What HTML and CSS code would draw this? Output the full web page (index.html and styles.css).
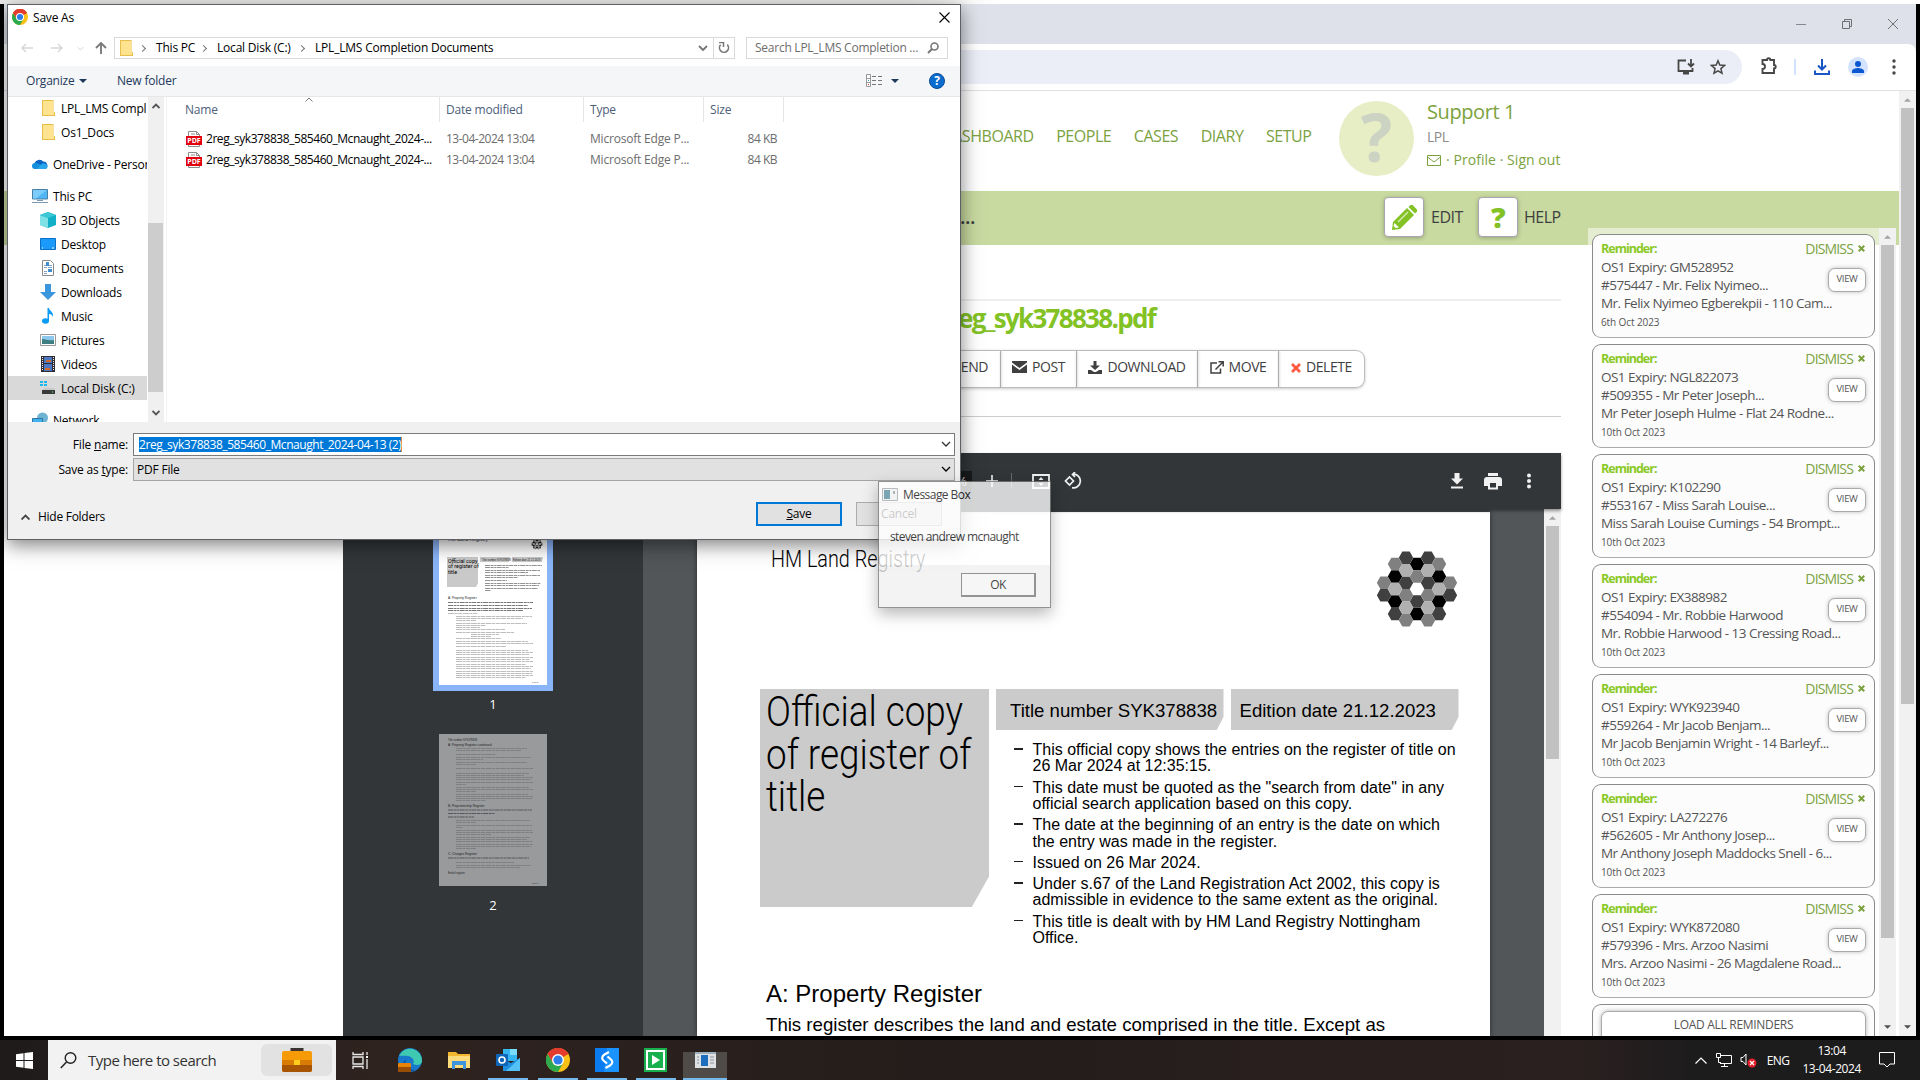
FILE: index.html
```html
<!DOCTYPE html>
<html lang="en">
<head>
<meta charset="utf-8">
<title>Save As</title>
<link rel="stylesheet" href="styles.css">
</head>
<body>
<svg class="defs" width="0" height="0">
  <defs>
    <symbol id="chrome" viewBox="0 0 24 24"><circle cx="12" cy="12" r="12" fill="#fbc116"/><path d="M12 12 1.600 6A12 12 0 0 1 22.400 6z" fill="#e33b2e"/><path d="M12 6h10.400A12 12 0 0 0 1.600 6l5.200 9z" fill="#e33b2e"/><path d="M1.600 6A12 12 0 0 0 12 24l5.200-9-5.200 3-5.200-3z" fill="#2da94f"/><circle cx="12" cy="12" r="6" fill="#fff"/><circle cx="12" cy="12" r="4.600" fill="#2f7de9"/></symbol>
    <symbol id="folder" viewBox="0 0 16 16"><path d="M2 0h11.500v12H15v4H2z" fill="#e8bf4a"/><path d="M3 1h10v11h1v3H3z" fill="#ffe391"/></symbol>
    <symbol id="pdf" viewBox="0 0 16 16"><path d="M2.500.5h8l3 3v12h-11z" fill="#fff" stroke="#8c8c8c"/><path d="M10.500.5v3h3M5 3h4" fill="none" stroke="#8c8c8c"/><path d="M0 5h16v9H0z" fill="#e2000f"/><text x="8" y="12" font-family="Open Sans, sans-serif" font-weight="700" font-size="7" text-anchor="middle" letter-spacing="0" fill="#fff">PDF</text></symbol>
    <symbol id="cross" viewBox="0 0 10 10"><path d="M2 0 5 3 8 0l2 2-3 3 3 3-2 2-3-3-3 3-2-2 3-3-3-3z" fill="currentColor"/></symbol>
    <symbol id="up" viewBox="0 0 8 4"><path d="M0 4 4 0l4 4z" fill="currentColor"/></symbol>
    <symbol id="down" viewBox="0 0 8 4"><path d="M0 0h8L4 4z" fill="currentColor"/></symbol>
    <symbol id="chev" viewBox="0 0 10 6"><path d="m1 1 4 4 4-4" fill="none" stroke="currentColor" stroke-width="1.300"/></symbol>
  </defs>
</svg>

<div class="topstrip"></div>

<div class="browser">
  <div class="tabstrip">
    <svg width="10" height="10" viewBox="0 0 10 10"><path d="M0 5.500h10" stroke="#85888c"/></svg>
    <svg width="10" height="10" viewBox="0 0 10 10"><path d="M.5 2.500h7v7h-7zM2.500 2.500v-2h7v7h-2" fill="none" stroke="#6d7075"/></svg>
    <svg width="10" height="10" viewBox="0 0 10 10"><path d="m0 0 10 10M10 0 0 10" stroke="#6d7075"/></svg>
  </div>
  <div class="toolbar">
    <div class="omnibox">
      <svg width="18" height="16" viewBox="0 0 18 16"><path d="M9 1.500H1.500v10.500h14V9M14 0v7M11 4.500l3 3 3-3" fill="none" stroke="#474747" stroke-width="1.800"/><path d="M6 12h6v3.500H6z" fill="#474747"/></svg>
      <svg width="16" height="16" viewBox="0 0 16 16"><path d="m8 1.800 1.800 4.300 4.700.4-3.600 3.100 1.100 4.600L8 11.800l-4 2.400 1.100-4.600-3.600-3.100 4.700-.4z" fill="none" stroke="#474747" stroke-width="1.500"/></svg>
    </div>
    <svg class="puzzle" width="17" height="18" viewBox="0 0 17 18"><path d="M1.500 3h4.500a1.700 1.700 0 0 1 3.400 0H13v5a1.700 1.700 0 0 1 0 3.400V16H1.500v-4a2.500 2.500 0 0 0 0-5z" fill="none" stroke="#474747" stroke-width="1.900"/></svg>
    <i class="tsep"></i>
    <svg class="dl" width="16" height="16" viewBox="0 0 16 16"><path d="M8 0v10M4 6.500l4 4 4-4M1 11.500V15h14v-3.500" fill="none" stroke="#1a57c4" stroke-width="2"/></svg>
    <svg class="avatar20" width="20" height="20" viewBox="0 0 20 20"><circle cx="10" cy="10" r="10" fill="#d3e3fd"/><circle cx="10" cy="7" r="3" fill="#0b57d0"/><path d="M4 16v-2c0-2 4-3 6-3s6 1 6 3v2z" fill="#0b57d0"/></svg>
    <svg width="4" height="16" viewBox="0 0 4 16"><g fill="#474747"><circle cx="2" cy="2" r="1.700"/><circle cx="2" cy="8" r="1.700"/><circle cx="2" cy="14" r="1.700"/></g></svg>
  </div>
  <div class="viewport">
    <main class="site">
      <header class="head">
        <nav><a>DASHBOARD</a><a>PEOPLE</a><a>CASES</a><a>DIARY</a><a>SETUP</a></nav>
        <div class="face">?</div>
        <div class="user">
          <b>Support 1</b>
          <span class="org">LPL</span>
          <span class="links"><svg width="14" height="11" viewBox="0 0 14 11"><path d="M.5.5h13v10H.5zM.5 2l6.500 5 6.500-5" fill="none" stroke="#7ba23f"/></svg> · Profile · Sign out</span>
        </div>
      </header>
      <div class="band">
        <span class="dots">Documents...</span>
        <span class="sq"><svg width="25" height="25" viewBox="0 0 25 25"><path d="m0 25 1-8L15 3l7 7L8 24z" fill="#83c225"/><path d="m16.500 2 2-2h2L25 4.500v2L23 8.500z" fill="#83c225"/><path d="m6 17 10-10" stroke="#d4eab2" stroke-width="1.500"/><path d="M2.500 18 7 22.500l-3.500.5-2-2z" fill="#fff"/></svg></span>
        <span class="bl">EDIT</span>
        <span class="sq q">?</span>
        <span class="bl help">HELP</span>
      </div>
      <section class="doc">
        <h1>2reg_syk378838.pdf</h1>
        <div class="btns">
          <span class="b-send">SEND</span>
          <span class="b-post"><svg width="15" height="12" viewBox="0 0 15 12"><path d="M0 0h15v1.500L7.500 7 0 1.500zM0 3.500 7.500 9 15 3.500V12H0z" fill="#404040"/></svg>POST</span>
          <span class="b-down"><svg width="14" height="13" viewBox="0 0 14 13"><path d="M5.500 0h3v4.500H12l-5 4.500-5-4.500h3.500zM0 9h3l3 2h2l3-2h3v4H0z" fill="#404040"/></svg>DOWNLOAD</span>
          <span class="b-move"><svg width="14" height="13" viewBox="0 0 14 13"><path d="M7 2H1v10h9.500V7.500M8.500.8h4.700v4.700M5.500 8.500 13 1" fill="none" stroke="#404040" stroke-width="1.500"/></svg>MOVE</span>
          <span class="b-del"><svg class="red" width="10" height="10"><use href="#cross"/></svg>DELETE</span>
        </div>
      </section>
      <div class="pdf">
        <div class="pbar">
          <span class="zoomv">55%</span>
          <svg class="plus" width="12" height="12" viewBox="0 0 12 12"><path d="M6 0v12M0 6h12" stroke="#f1f1f1" stroke-width="1.600"/></svg>
          <i></i>
          <svg class="fit" width="18" height="15" viewBox="0 0 18 15"><path d="M1 1h16v13H1z" fill="none" stroke="#f1f1f1" stroke-width="1.800"/><path d="m9 3 2.500 3h-5zM9 12l2.500-3h-5z" fill="#f1f1f1"/></svg>
          <svg class="rot" width="18" height="18" viewBox="0 0 18 18"><path d="m5.500 5 4 4-4 4-4-4zM9 2.200a6.800 6.800 0 1 1-1 13.400M11 0 8.500 2.500 11 5" fill="none" stroke="#f1f1f1" stroke-width="1.700"/></svg>
          <svg class="pdl" width="12" height="16" viewBox="0 0 12 16"><path d="M3.500 0h5v5.500H12l-6 6-6-6h3.500zM0 13.500h12v2H0z" fill="#f1f1f1"/></svg>
          <svg class="ppr" width="18" height="17" viewBox="0 0 18 17"><path d="M4 0h10v3H4zM0 7a3 3 0 0 1 3-3h12a3 3 0 0 1 3 3v6h-4v3.500H4V13H0z" fill="#f1f1f1"/><path d="M6 10h6v4.500H6z" fill="#323639"/></svg>
          <svg class="pdots" width="4" height="16" viewBox="0 0 4 16"><g fill="#f1f1f1"><circle cx="2" cy="2.500" r="2"/><circle cx="2" cy="8" r="2"/><circle cx="2" cy="13.500" r="2"/></g></svg>
        </div>
        <div class="pmain">
          <aside>
            <div class="thumb on">
              <svg width="108" height="152" viewBox="0 0 108 152">
                <rect width="108" height="152" fill="#fff"/>
                <text x="9" y="8" font-size="5">HM Land Registry</text>
                <use href="#biglogo" transform="translate(98 11) scale(.14)"/>
                <path d="M8 24h31v26l-2 4H8zM41 24h30l-1 5H41zM73 24h31l-1 5H73z" fill="#c9c9c9"/>
                <g class="slim"><text x="9" y="29.500">Official copy</text><text x="9" y="35.300">of register of</text><text x="9" y="41">title</text></g>
                <text x="43" y="28" font-size="2.600">Title number SYK378838</text><text x="74" y="28" font-size="2.600">Edition date 21.12.2023</text>
                <path d="M46 32.500h57M46 34.500h24M46 37.500h55M46 39.500h43M46 42.500h55M46 44.500h33M46 47.500h22M46 50.500h56M46 52.500h54M46 55.500h53M46 57.500h6" stroke="#777" stroke-dasharray="5 .6 3 .6 2 .5" stroke-width=".8"/>
                <text x="9" y="66" font-size="3.200">A: Property Register</text>
                <path d="M9 69.500h85M9 72.500h80M9 75.500h84M9 77.500h75" stroke="#777" stroke-dasharray="5 .6 3 .6 2 .5"/>
                <path d="M9 80.500h30M17 83.500h76M17 85.500h67M17 87.500h20M17 90.500h71M17 92.500h30M17 94.500h24M17 96.500h49M17 99.500h58M32 101.500h28M32 103.500h20M17 105.500h45M17 108.500h72M17 110.500h77M17 113.500h50M17 117.500h72M17 119.500h77M17 121.500h73M17 124.500h77M17 126.500h74M17 128.500h77M17 131.500h70M17 133.500h77M17 135.500h75M17 138.500h77M17 140.500h76M17 142.500h77M17 144.500h70" stroke="#b5b5b5" stroke-dasharray="6 .6 3 .6 4 .6" stroke-width=".9"/>
                <text x="93" y="149.500" font-size="2.500">1 of 3</text>
              </svg>
            </div>
            <p>1</p>
            <div class="thumb">
              <svg width="108" height="152" viewBox="0 0 108 152">
                <rect width="108" height="152" fill="#989a9c"/>
                <text x="9" y="7" font-size="2.600">Title number SYK378838</text>
                <text x="9" y="12" font-size="3.200">A: Property Register continued</text>
                <path d="M17 14.500h71M17 16.500h65M17 20.500h40M17 23.500h75M17 25.500h27M17 28.500h71M17 30.500h20M17 34.500h77M17 39.500h73M17 41.500h68M17 43.500h77M17 45.500h75M17 48.500h77M17 50.500h10M17 53.500h73M17 55.500h77M17 57.500h20M17 60.500h72M17 62.500h77M17 64.500h76M17 66.500h30M17 86.500h74M17 88.500h20M17 91.500h76M17 93.500h7M17 96.500h76M17 98.500h77M17 100.500h35M17 103.500h74M17 105.500h71M17 107.500h76M17 110.500h77M17 112.500h75M17 114.500h20M17 128.500h58M17 131.500h75M17 133.500h64" stroke="#7b7c7e" stroke-dasharray="6 .6 3 .6 4 .6" stroke-width=".9"/>
                <text x="9" y="73" font-size="3.200">B: Proprietorship Register</text>
                <path d="M9 76h84M9 79.500h47M9 83h26M9 124h81" stroke="#55575a" stroke-dasharray="5 .6 3 .6 2 .5"/>
                <text x="9" y="121" font-size="3.200">C: Charges Register</text><text x="9" y="140" font-size="2.600">End of register</text>
                <text x="93" y="149.500" font-size="2.500">2 of 3</text>
              </svg>
            </div>
            <p>2</p>
          </aside>
          <div class="pview">
            <article>
              <div class="lr">
                <span class="slim">HM Land Registry</span>
                <svg width="80" height="76" viewBox="-40 -38 80 76">
                  <g id="biglogo">
                    <g fill="#000"><path id="hx" d="M-7.200 0-3.700-6.300h7.400L7.200 0 3.700 6.300h-7.400z" transform="translate(0 -25)"/></g>
                    <use href="#hx" y="50"/><use href="#hx" x="-22" y="12.500"/><use href="#hx" x="22" y="12.500"/><use href="#hx" x="-22" y="37.500"/><use href="#hx" x="22" y="37.500"/>
                    <g fill="#404040"><path d="M-18.200-31.250l3.500-6.250h7.400l3.500 6.250-3.500 6.250h-7.400zM3.800-31.250l3.500-6.250h7.400l3.500 6.250-3.500 6.250H7.300zM-18.200-6.250l3.500-6.250h7.400l3.500 6.250L-7.300 0h-7.400zM3.800-6.250l3.500-6.250h7.400l3.500 6.250L14.700 0H7.300zM-7.200 12.500l3.500-6.250h7.400l3.500 6.250-3.500 6.250h-7.400zM-29.200 25l3.500-6.250h7.400l3.500 6.250-3.500 6.250h-7.400zM14.800 25l3.500-6.250h7.400l3.500 6.250-3.500 6.250h-7.400zM-40.200 6.250l3.500-6.250h7.400l3.500 6.250-3.500 6.250h-7.400zM25.800 6.250l3.500-6.250h7.400l3.500 6.250-3.500 6.250h-7.400z"/></g>
                    <g fill="#808080"><path d="M-7.200-12.500l3.500-6.250h7.400l3.500 6.250-3.500 6.250h-7.400zM-29.200-25l3.500-6.250h7.400l3.500 6.250-3.500 6.250h-7.400zM14.800-25l3.500-6.250h7.400l3.500 6.250-3.500 6.250h-7.400zM-40.200-6.250l3.500-6.250h7.400l3.500 6.250L-29.300 0h-7.400zM25.800-6.250l3.500-6.250h7.400l3.500 6.250L36.700 0h-7.400zM-18.200 6.250l3.500-6.250h7.400l3.500 6.250-3.500 6.250h-7.400zM3.800 6.250l3.500-6.250h7.400l3.500 6.250-3.500 6.250H7.300zM-18.200 31.250l3.500-6.250h7.400l3.500 6.250-3.500 6.250h-7.400zM3.800 31.250l3.500-6.250h7.400l3.500 6.250-3.500 6.250H7.300z"/></g>
                    <g fill="#b0b0b0"><path d="M-18.200-18.750l3.500-6.250h7.400l3.500 6.250-3.500 6.250h-7.400zM3.800-18.750l3.500-6.250h7.400l3.500 6.250-3.500 6.250H7.300zM-29.200 0l3.500-6.250h7.400l3.500 6.250-3.500 6.250h-7.400zM14.800 0l3.500-6.250h7.400l3.500 6.250-3.500 6.250h-7.400zM-18.200 18.750l3.500-6.250h7.400l3.500 6.250-3.500 6.250h-7.400zM3.800 18.750l3.500-6.250h7.400l3.500 6.250-3.500 6.250H7.300z"/></g>
                  </g>
                </svg>
              </div>
              <div class="title">
                <div class="official"><span class="slim">Official copy<br>of register of<br>title</span></div>
                <div class="facts">
                  <div class="tags"><span>Title number SYK378838</span><span>Edition date 21.12.2023</span></div>
                  <ul>
                    <li>This official copy shows the entries on the register of title on<br>26 Mar 2024 at 12:35:15.</li>
                    <li>This date must be quoted as the "search from date" in any<br>official search application based on this copy.</li>
                    <li>The date at the beginning of an entry is the date on which<br>the entry was made in the register.</li>
                    <li>Issued on 26 Mar 2024.</li>
                    <li>Under s.67 of the Land Registration Act 2002, this copy is<br>admissible in evidence to the same extent as the original.</li>
                    <li>This title is dealt with by HM Land Registry Nottingham<br>Office.</li>
                  </ul>
                </div>
              </div>
              <h2>A: Property Register</h2>
              <p>This register describes the land and estate comprised in the title. Except as<br>mentioned below, the title includes any legal easements granted by the</p>
            </article>
            <div class="sb psb"><svg width="7" height="4"><use href="#up"/></svg><b></b></div>
          </div>
        </div>
      </div>
    </main>
    <div class="sb msb"><svg width="7" height="4"><use href="#up"/></svg><b></b><svg class="dn" width="7" height="4"><use href="#down"/></svg></div>

    <div class="reminders">
      <div class="cards">
        <div class="card"><div class="r1"><b>Reminder:</b><span>DISMISS <svg width="7" height="7"><use href="#cross"/></svg></span></div><div class="view">VIEW</div><p>OS1 Expiry: GM528952</p><p>#575447 - Mr. Felix Nyimeo...</p><p>Mr. Felix Nyimeo Egberekpii - 110 Cam...</p><small>6th Oct 2023</small></div>
        <div class="card"><div class="r1"><b>Reminder:</b><span>DISMISS <svg width="7" height="7"><use href="#cross"/></svg></span></div><div class="view">VIEW</div><p>OS1 Expiry: NGL822073</p><p>#509355 - Mr Peter Joseph...</p><p>Mr Peter Joseph Hulme - Flat 24 Rodne...</p><small>10th Oct 2023</small></div>
        <div class="card"><div class="r1"><b>Reminder:</b><span>DISMISS <svg width="7" height="7"><use href="#cross"/></svg></span></div><div class="view">VIEW</div><p>OS1 Expiry: K102290</p><p>#553167 - Miss Sarah Louise...</p><p>Miss Sarah Louise Cumings - 54 Brompt...</p><small>10th Oct 2023</small></div>
        <div class="card"><div class="r1"><b>Reminder:</b><span>DISMISS <svg width="7" height="7"><use href="#cross"/></svg></span></div><div class="view">VIEW</div><p>OS1 Expiry: EX388982</p><p>#554094 - Mr. Robbie Harwood</p><p>Mr. Robbie Harwood - 13 Cressing Road...</p><small>10th Oct 2023</small></div>
        <div class="card"><div class="r1"><b>Reminder:</b><span>DISMISS <svg width="7" height="7"><use href="#cross"/></svg></span></div><div class="view">VIEW</div><p>OS1 Expiry: WYK923940</p><p>#559264 - Mr Jacob Benjam...</p><p>Mr Jacob Benjamin Wright - 14 Barleyf...</p><small>10th Oct 2023</small></div>
        <div class="card"><div class="r1"><b>Reminder:</b><span>DISMISS <svg width="7" height="7"><use href="#cross"/></svg></span></div><div class="view">VIEW</div><p>OS1 Expiry: LA272276</p><p>#562605 - Mr Anthony Josep...</p><p>Mr Anthony Joseph Maddocks Snell - 6...</p><small>10th Oct 2023</small></div>
        <div class="card"><div class="r1"><b>Reminder:</b><span>DISMISS <svg width="7" height="7"><use href="#cross"/></svg></span></div><div class="view">VIEW</div><p>OS1 Expiry: WYK872080</p><p>#579396 - Mrs. Arzoo Nasimi</p><p>Mrs. Arzoo Nasimi - 26 Magdalene Road...</p><small>10th Oct 2023</small></div>
        <div class="card last"><div class="load">LOAD ALL REMINDERS</div></div>
      </div>
      <div class="sb rsb"><svg width="7" height="4"><use href="#up"/></svg><b></b><svg class="dn" width="7" height="4"><use href="#down"/></svg></div>
    </div>
  </div>
</div>

<div class="dialog">
  <div class="dtitle"><svg width="16" height="16"><use href="#chrome"/></svg><span>Save As</span><svg class="x" width="11" height="11" viewBox="0 0 11 11"><path d="m.5.5 10 10M10.500.5l-10 10" stroke="#000" stroke-width="1.100"/></svg></div>
  <div class="daddr">
    <svg class="a1" width="12" height="10" viewBox="0 0 12 10"><path d="M12 5H1M5 1 1 5l4 4" fill="none" stroke="#d6d6d6" stroke-width="1.400"/></svg>
    <svg class="a2" width="12" height="10" viewBox="0 0 12 10"><path d="M0 5h11M7 1l4 4-4 4" fill="none" stroke="#d6d6d6" stroke-width="1.400"/></svg>
    <svg class="a3 lite" width="7" height="5"><use href="#chev"/></svg>
    <svg class="a4" width="12" height="12" viewBox="0 0 12 12"><path d="M6 12V1.500M1 6l5-5 5 5" fill="none" stroke="#7b7b7b" stroke-width="1.900"/></svg>
    <div class="path"><svg width="16" height="16"><use href="#folder"/></svg><em></em><span class="c1">This PC</span><em></em><span class="c2">Local Disk (C:)</span><em></em><span class="c3">LPL_LMS Completion Documents</span><svg class="pc" width="10" height="6" viewBox="0 0 10 6"><path d="m1 1 4 4 4-4" fill="none" stroke="#777" stroke-width="1.900"/></svg></div>
    <div class="refresh"><svg width="12" height="12" viewBox="0 0 12 12"><path d="M2.600 2.800a4.500 4.500 0 1 0 6.600-.2" fill="none" stroke="#777" stroke-width="1.600"/><path d="M1 .5h4.500V5" fill="none" stroke="#777" stroke-width="1.500"/></svg></div>
    <div class="search"><span>Search LPL_LMS Completion ...</span><svg width="12" height="12" viewBox="0 0 12 12"><circle cx="7.500" cy="4.500" r="3.500" fill="none" stroke="#777" stroke-width="1.600"/><path d="M5 7 1 11" stroke="#777" stroke-width="1.900"/></svg></div>
  </div>
  <div class="dcmd"><span class="org2">Organize</span><svg width="8" height="4"><use href="#down"/></svg><span class="nf">New folder</span>
    <svg class="vw" width="16" height="13" viewBox="0 0 16 13"><path d="M.5.5h4v12h-4zM.5 4.500h4M.5 8.500h4" fill="#fff" stroke="#999"/><path d="M6 2.500h4m2 0h4M6 6.500h4m2 0h4M6 10.500h4m2 0h4" stroke="#777"/><path d="M2 6h1v1H2z" fill="#3a9be8"/><path d="M2 10h1v1H2z" fill="#d33"/></svg>
    <svg width="8" height="4"><use href="#down"/></svg><i class="hlp">?</i></div>
  <div class="dmain">
    <div class="tree">
      <div><svg width="16" height="16"><use href="#folder"/></svg>LPL_LMS Compl</div>
      <div><svg width="16" height="16"><use href="#folder"/></svg>Os1_Docs</div>
      <div class="top od"><svg width="16" height="16" viewBox="0 0 16 16"><path d="M3 12.500A3 3 0 0 1 2.600 7 5 5 0 0 1 11 5.500a4 4 0 0 1 3 7z" fill="#0a64c4"/><path d="M3 13a3 3 0 0 1 0-6c2-.4 4 .6 6 2l5 3.500c-.3.400-1 .5-1.500.5z" fill="#1490df"/><path d="M9 8.500a4 4 0 0 1 6 .5 2.600 2.600 0 0 1-1 4H5z" fill="#28a8ea"/></svg>OneDrive - Person</div>
      <div class="top pc2"><svg width="16" height="16" viewBox="0 0 16 16"><path d="M.5 1.500h15v9.500H.5z" fill="#4fb5f5" stroke="#4a7fa5"/><path d="M1 2h14L4 10.500H1z" fill="#7cccfb"/><path d="M5 12.500h6M0 14.500h16" stroke="#7e98ab"/></svg>This PC</div>
      <div class="sub"><svg width="16" height="16" viewBox="0 0 16 16"><path d="m8 0 8 3v10l-8 3-8-3V3z" fill="#12b0c6"/><path d="m0 3 8 3v10l-8-3z" fill="#7fe0e6"/><path d="m8 0 8 3-8 3-8-3z" fill="#3cc7d6"/></svg>3D Objects</div>
      <div><svg width="16" height="16" viewBox="0 0 16 16"><path d="M.5 2.500h15v11H.5z" fill="#1a9bfc" stroke="#0b6fc4"/><path d="M2 12h1M12 12h2" stroke="#fff"/></svg>Desktop</div>
      <div><svg width="16" height="16" viewBox="0 0 16 16"><path d="M2.500.5h8l3 3v12h-11z" fill="#fff" stroke="#8a8a8a"/><path d="M4 5.500h3m1 0h4M4 7.500h3m1 0h4M4 11.500h3M4 13.500h3" stroke="#7fa6c9"/><path d="M6 2h3v4H6zM8 9h4v3H8z" fill="#3f8fd0"/></svg>Documents</div>
      <div><svg width="16" height="16" viewBox="0 0 16 16"><path d="M5 0h6v8h5l-8 8-8-8h5z" fill="#3a96dd"/></svg>Downloads</div>
      <div><svg width="16" height="16" viewBox="0 0 16 16"><ellipse cx="5.500" cy="13" rx="3.500" ry="2.800" fill="#0a9bf5"/><path d="M7.500 0H9c.5 3 5 4 4 9-.5-2-2-3-4-3v7H7.500z" fill="#0a9bf5"/></svg>Music</div>
      <div><svg width="16" height="16" viewBox="0 0 16 16"><path d="M.5 2.500h15v11H.5z" fill="#fff" stroke="#999"/><path d="M2 4h12v8H2z" fill="#8cc8ee"/><path d="M2 7c4 0 6 2 12 1v4H2z" fill="#3d7f80"/></svg>Pictures</div>
      <div><svg width="16" height="16" viewBox="0 0 16 16"><path d="M1 0h14v16H1z" fill="#2d2d35"/><path d="M4 1h8v6H4zM4 8h8v7H4z" fill="#4d78c4"/><path d="M2.500 1v14M13.500 1v14" stroke="#eee" stroke-dasharray="1 1"/><path d="M6 4h5v2H6zM5 12h5v2H5z" fill="#d5692d"/></svg>Videos</div>
      <div class="sel"><svg width="16" height="16" viewBox="0 0 16 16"><path d="M0 1h3v2H0zM4 1h3v2H4zM0 4h3v2H0zM4 4h3v2H4z" fill="#1cb8ea"/><path d="m3 9 1-1h10l1 3H3z" fill="#c9c9c9"/><path d="M2 10h13v4H2z" fill="#3a3a3a"/><path d="M12 12h1" stroke="#6f6"/></svg>Local Disk (C:)</div>
      <div class="top net"><svg width="16" height="16" viewBox="0 0 16 16"><circle cx="10.500" cy="6" r="5.500" fill="#6fb3d4"/><path d="M.5 6.500h10v7H.5z" fill="#3fb2f0" stroke="#33749f"/></svg>Network</div>
    </div>
    <div class="tsb"><svg width="8" height="6" viewBox="0 0 8 6"><path d="m.5 5 3.500-3.500L7.500 5" fill="none" stroke="#555" stroke-width="1.900"/></svg><b></b><svg class="dn" width="8" height="6" viewBox="0 0 8 6"><path d="m.5 1 3.500 3.500L7.500 1" fill="none" stroke="#555" stroke-width="1.900"/></svg></div>
    <div class="list">
      <div class="row hd"><span class="n">Name</span><span class="d">Date modified</span><span class="t">Type</span><span class="s">Size</span></div>
      <svg class="sort" width="8" height="5" viewBox="0 0 8 5"><path d="m.5 4.500 3.500-3.500 3.500 3.500" fill="none" stroke="#777"/></svg>
      <div class="row"><span class="n"><svg width="16" height="16"><use href="#pdf"/></svg>2reg_syk378838_585460_Mcnaught_2024-...</span><span class="d">13-04-2024 13:04</span><span class="t">Microsoft Edge P...</span><span class="s">84 KB</span></div>
      <div class="row"><span class="n"><svg width="16" height="16"><use href="#pdf"/></svg>2reg_syk378838_585460_Mcnaught_2024-...</span><span class="d">13-04-2024 13:04</span><span class="t">Microsoft Edge P...</span><span class="s">84 KB</span></div>
    </div>
  </div>
  <div class="dfoot">
    <div class="f"><label>File <u>n</u>ame:</label><div class="inp"><mark>2reg_syk378838_585460_Mcnaught_2024-04-13 (2)</mark><svg width="10" height="6"><use href="#chev"/></svg></div></div>
    <div class="f f2"><label>Save as <u>t</u>ype:</label><div class="inp g"><span>PDF File</span><svg width="10" height="6"><use href="#chev"/></svg></div></div>
    <div class="acts"><div class="hide"><svg width="9" height="6" viewBox="0 0 9 6"><path d="m.5 5.500 4-4 4 4" fill="none" stroke="#444" stroke-width="1.800"/></svg>Hide Folders</div><div class="btn save"><u>S</u>ave</div><div class="btn">Cancel</div></div>
  </div>
</div>

<div class="msg">
  <div class="mt"><svg width="16" height="13" viewBox="0 0 16 13"><path d="M.5.5h15v12H.5z" fill="#f4f4f4" stroke="#a9aeb2"/><path d="M2 2h6v9H2z" fill="#5b93a3"/><path d="M11 3h2v3h-2z" fill="#9aa"/></svg>Message Box</div>
  <div class="mb">steven andrew mcnaught</div>
  <div class="mf"><span>OK</span></div>
</div>

<div class="taskbar">
  <div class="start"><svg width="17" height="17" viewBox="0 0 17 17"><path d="M0 2.300 7.500 1.200V8H0zM8.500 1 17 0v8H8.500zM0 9h7.500v6.800L0 14.700zM8.500 9H17v8l-8.500-1.100z" fill="#fff"/></svg></div>
  <div class="tsearch"><svg width="17" height="17" viewBox="0 0 17 17"><circle cx="10.500" cy="6" r="5.300" fill="none" stroke="#222" stroke-width="1.400"/><path d="M6.500 10 .8 16" stroke="#222" stroke-width="1.500"/></svg><span>Type here to search</span>
    <div class="pill"><svg width="30" height="26" viewBox="0 0 30 26"><path d="M10 5V2.500h10V5" fill="none" stroke="#3a3330" stroke-width="3"/><rect y="4" width="30" height="21" rx="2" fill="#f79a08"/><path d="M0 15h30v8a2 2 0 0 1-2 2H2a2 2 0 0 1-2-2z" fill="#a85405"/><path d="M0 13h30v5H0z" fill="#d97c05"/><path d="M12 13h6v5h-6z" fill="#ffcd1c"/></svg></div></div>
  <div class="ic i1"><svg width="17" height="17" viewBox="0 0 17 17"><path d="M1 0v2.500h10V0M1 17v-2.500h10V17M1 5h10v7H1zM15 0v3M15 7v10" fill="none" stroke="#e8e8e8" stroke-width="1.300"/><path d="M14 4h2v2h-2z" fill="#fff"/></svg></div>
  <div class="ic"><svg width="24" height="24" viewBox="0 0 24 24"><circle cx="12" cy="12" r="12" fill="#1878cc"/><path d="M1 8A12 12 0 0 1 24 13c0 4-5 5-9 3 2-3 0-7-5-8-4-.5-7 0-9 0z" fill="#3fc9b0"/><path d="M8 12c-2 5 2 10 9 10a12 12 0 0 1-8 1.500C5 22 3 14 8 12z" fill="#0c4f9e"/><rect y="15" width="13" height="9" rx="1" fill="#e8830a"/><path d="M0 19h13v5H0z" fill="#9a4d06"/></svg></div>
  <div class="ic"><svg width="22" height="19" viewBox="0 0 22 19"><path d="M0 1h8l2 2h12v14H0z" fill="#f3b72f"/><path d="M0 5h22v12H0z" fill="#ffdc7b"/><path d="M4 10h14v8h-3v-4H7v4H4z" fill="#3f95dd"/></svg></div>
  <div class="ic run"><svg width="24" height="22" viewBox="0 0 24 22"><path d="M7 0h14v12H7z" fill="#35b6f0"/><path d="M14 0h7v6h-7z" fill="#7adcfb"/><path d="M7 10l8 4 9-5v13H7z" fill="#1f8fe0"/><path d="m24 9-14 13h14z" fill="#55c2f5"/><rect y="5" width="12" height="12" rx="1" fill="#0f66b8"/><circle cx="6" cy="11" r="3" fill="none" stroke="#fff" stroke-width="1.600"/></svg></div>
  <div class="ic run cr"><svg width="24" height="24"><use href="#chrome"/></svg></div>
  <div class="ic run"><svg width="24" height="24" viewBox="0 0 24 24"><path d="M0 0h24v24H0z" fill="#0a7cf0"/><path d="M12 0h12v24H9z" fill="#1a93ff"/><path d="M14 4 9.500 6.500c-3 2-3 4.500-.5 6.500l3 2.500M10.500 20l4.500-2.500c3-2 3-4.500.5-6.500l-3-2.500" fill="none" stroke="#fff" stroke-width="2.200"/></svg></div>
  <div class="ic run"><svg width="23" height="24" viewBox="0 0 23 24"><path d="M0 0h23v24H0z" fill="#17b04c"/><path d="M3 3h17v18H3z" fill="none" stroke="#fff" stroke-width="2"/><path d="m8 7 8 5-8 5z" fill="#fff"/></svg></div>
  <div class="ic run act"><svg width="21" height="16" viewBox="0 0 21 16"><path d="M0 0h21v16H0z" fill="#dfe2e4"/><path d="M0 0h21v2H0z" fill="#9fb0bd"/><path d="M6 3h7v11H6z" fill="#1d6fbd"/><path d="M2 5h2M2 8h2M2 11h2M15 5h4M15 8h4M15 11h4" stroke="#8a949c"/></svg></div>
  <div class="tray">
    <svg width="12" height="7" viewBox="0 0 12 7"><path d="m.5 6.500 5.500-5.500 5.500 5.500" fill="none" stroke="#fff" stroke-width="1.200"/></svg>
    <svg class="y1" width="16" height="14" viewBox="0 0 16 14"><path d="M4 2.500h11.500v8H4M5 13.500h7M8.500 10.500v3M.5.500h4v4h-4zM2.500 4.500v5H5" fill="none" stroke="#fff"/></svg>
    <svg class="y2" width="17" height="15" viewBox="0 0 17 15"><path d="M1 4.500h2l3-3.500v11l-3-3.500H1z" fill="none" stroke="#fff"/><circle cx="12" cy="10" r="4.500" fill="#e0202a"/><path d="m10 8 4 4M14 8l-4 4" stroke="#fff" stroke-width="1.200"/></svg>
    <span class="eng">ENG</span>
    <span class="clock">13:04<br>13-04-2024</span>
    <svg class="y3" width="16" height="16" viewBox="0 0 16 16"><path d="M.5.5h15v11.500h-4.500L8 15l-3-3H.5z" fill="none" stroke="#fff"/></svg>
  </div>
</div>
</body>
</html>
```
FILE: styles.css
```css
* { box-sizing: border-box; }
body { margin: 0; width: 1920px; height: 1080px; overflow: hidden; background: #000; font-family: "Open Sans", "Noto Sans", sans-serif; position: relative; }
p, h1, h2, ul { margin: 0; padding: 0; font-weight: 400; }
svg { display: block; flex: none; }
.thumb text { font-family: "Liberation Sans", sans-serif; fill: #222; }
.defs { position: absolute; }
.topstrip { height: 4px; background: linear-gradient(90deg, #ececea 900px, #fff 1000px); }

/* browser window */
.browser { position: absolute; left: 4px; top: 4px; width: 1912px; height: 1032px; background: #fff; display: flex; flex-direction: column; overflow: hidden; }
.tabstrip { height: 40px; background: #dee1e9; display: flex; justify-content: flex-end; align-items: center; gap: 36px; padding-right: 18px; flex: none; }
.toolbar { height: 47px; border-bottom: 1px solid #dfe0e3; background: #fff; display: flex; align-items: center; justify-content: flex-end; padding-right: 20px; flex: none; border-radius: 0 8px 0 0; box-shadow: 8px -8px 0 #dee1e9; }
.omnibox { width: 1500px; height: 34px; border-radius: 17px; background: #ebeef7; display: flex; align-items: center; justify-content: flex-end; gap: 15px; padding-right: 16px; }
.puzzle { margin-left: 19px; margin-top: -2px; }
.tsep { width: 2px; height: 16px; background: #d3e3fd; margin: 0 18px 0 16px; }
.avatar20 { margin: 0 24px 0 18px; }
.viewport { flex: 1; display: flex; position: relative; min-height: 0; }
.site { flex: 1; min-width: 0; display: flex; flex-direction: column; overflow: hidden; }
.sb { background: #f1f1f1; width: 17px; display: flex; flex-direction: column; align-items: center; color: #a3a3a3; padding-top: 7px; flex: none; }
.sb b { width: 13px; background: #c1c1c1; margin-top: 6px; }
.sb .dn { color: #505050; margin-top: auto; margin-bottom: 7px; }
.msb b { height: 596px; }

.head { height: 100px; flex: none; width: 1557px; display: flex; justify-content: flex-end; }
.head nav { display: flex; gap: 22.500px; align-items: center; margin-right: 27.500px; height: 90px; font-size: 16px; letter-spacing: -.45px; color: #7ba23f; }
.face { width: 75px; height: 75px; border-radius: 50%; background: #e7edc5; color: #cdd3c3; font: 700 66px/70px "Open Sans", sans-serif; text-align: center; margin: 10px 13px 0 0; }
.user { width: 134px; display: flex; flex-direction: column; color: #7ba23f; padding-top: 7px; white-space: nowrap; }
.user b { font-weight: 400; font-size: 20px; line-height: 28px; letter-spacing: -.4px; }
.user .org { color: #8b8b8b; font-size: 14px; line-height: 22px; letter-spacing: -.5px; }
.links { display: flex; align-items: center; gap: 5px; font-size: 14px; line-height: 24px; letter-spacing: .05px; }
.band { height: 54px; background: #c8daa0; display: flex; align-items: center; flex: none; padding-left: 850px; color: #3f4040; font-size: 16px; letter-spacing: -.5px; }
.dots { font-size: 20px; width: 530px; font-weight: 600; padding-bottom: 4px; }
.sq { width: 40px; height: 40px; border: 1px solid #aaa3b0; border-radius: 4px; background: #fff; box-shadow: 0 1px 4px rgba(0,0,0,.25); display: flex; align-items: center; justify-content: center; margin-top: -2px; }
.q { color: #83c225; font: 800 29px/36px "Open Sans", sans-serif; margin-left: 14px; }
.bl { width: 33px; margin-left: 7px; padding-bottom: 2px; }
.help { margin-left: 6px; }
.doc { width: 1218px; margin: 54px 0 0 339px; height: 118px; border-top: 2px solid #eee; border-bottom: 1px solid #ccc; flex: none; }
.doc h1 { width: 812px; text-align: right; color: #83c225; font: 700 26px/34px "Open Sans", sans-serif; letter-spacing: -1.700px; height: 50px; }
.btns { width: 1022px; height: 38px; display: flex; justify-content: flex-end; font-size: 14px; line-height: 32px; letter-spacing: -.45px; color: #404040; margin-top: -1px; }
.btns span { border: 1px solid #bbb; border-left: 0; box-shadow: 0 1px 3px rgba(0,0,0,.22); display: flex; align-items: flex-start; justify-content: center; gap: 5px; }
.btns svg { margin-top: 10px; }
.b-send { width: 100px; justify-content: flex-end !important; padding-right: 12px; }
.b-post { width: 76px; } .b-down { width: 121px; } .b-move { width: 81px; } .b-del { width: 86px; border-radius: 0 9px 9px 0; }
.red { color: #ff5a44; margin-top: 12px !important; }

/* pdf viewer */
.pdf { width: 1218px; margin: 36px 0 0 339px; display: flex; flex-direction: column; flex: 1; min-height: 0; }
.pbar { height: 56px; background: #323639; display: flex; align-items: center; flex: none; padding-left: 590px; position: relative; box-shadow: 0 2px 3px rgba(0,0,0,.4); }
.pbar i { width: 1px; height: 16px; background: #666a6d; margin: 0 20px 0 13px; }
.zoomv { background: #191b1c; color: #f1f1f1; font-size: 13px; line-height: 20px; width: 39px; text-align: right; padding-right: 5px; margin-right: 14px; }
.rot { margin-left: 14px; }
.pdl { margin-left: 369px; } .ppr { margin-left: 21px; } .pdots { margin-left: 25px; }
.pmain { flex: 1; display: flex; min-height: 0; }
.pmain aside { width: 300px; background: #323639; display: flex; flex-direction: column; align-items: center; color: #fff; font-size: 13px; line-height: 16px; }
.thumb.on { border: 6px solid #8ab4f8; margin-top: 18px; margin-bottom: 5px; }
.thumb + p { margin-bottom: 22px; }
.pmain aside p + .thumb { margin-bottom: 11px; }
.pview { flex: 1; background: #525659; display: flex; justify-content: space-between; padding-left: 54px; }
article { width: 793px; margin-top: 3px; background: #fff; color: #000; font-family: "Liberation Sans", Arial, sans-serif; padding: 40px 32px 0 63px; box-shadow: 0 0 5px rgba(0,0,0,.5); overflow: hidden; }
.psb b { height: 233px; }
.slim { font-family: Roboto, "Open Sans", sans-serif; font-weight: 300; white-space: nowrap; display: inline-block; transform-origin: 0 0; }
.thumb .slim text { font-family: Roboto, sans-serif; font-weight: 400; fill: #000; font-size: 5.400px; }
.lr { display: flex; justify-content: space-between; padding-left: 11px; height: 137px; }
.lr .slim { font-size: 23px; line-height: 28px; margin-top: -6px; transform: scaleX(.86); }
.lr svg { margin: -1px 1px 0 0; }
.title { display: flex; gap: 7px; }
.official { width: 229px; height: 218px; background: #cbcbcb; clip-path: polygon(0 0, 100% 0, 100% 86%, 92.500% 100%, 0 100%); padding: 2px 0 0 6px; }
.official .slim { font-size: 42px; line-height: 42.500px; transform: scaleX(.877); }
.facts { width: 463px; }
.tags { display: flex; gap: 7.500px; }
.tags span { width: 227.500px; height: 41px; background: #cbcbcb; clip-path: polygon(0 0, 100% 0, 100% 68%, 97% 100%, 0 100%); font-size: 18.600px; line-height: 43px; padding-left: 14px; white-space: nowrap; }
.tags span + span { padding-left: 8.500px; }
.facts ul { list-style: none; font-size: 16px; line-height: 16.400px; margin-top: 12px; padding-left: 36.500px; white-space: nowrap; }
.facts li { margin-bottom: 4.800px; position: relative; }
.facts li::before { content: ""; position: absolute; left: -19px; top: 6px; width: 9px; height: 1.500px; background: #222; }
article h2 { font-size: 24px; line-height: 28px; margin: 28.500px 0 0 6px; }
article > p { font-size: 18.640px; line-height: 18.700px; margin: 8px 0 0 6px; white-space: nowrap; }

/* reminders */
.reminders { position: absolute; left: 1584px; top: 137px; width: 308px; height: 808px; display: flex; background: rgba(255,255,255,.5); overflow: hidden; }
.cards { flex: 1; padding: 6px 4px 0; }
.card { height: 104px; margin-bottom: 6px; border: 1px solid #8a8a8a; border-bottom-color: #aaa; border-radius: 9px; background: #fcfcfc; padding: 5px 8px; color: #555; font-size: 13.500px; line-height: 18px; letter-spacing: -.52px; white-space: nowrap; }
.r1 { display: flex; justify-content: space-between; letter-spacing: -.85px; color: #7ba23f; height: 17.500px; line-height: 18px; font-size: 14px; }
.r1 b { color: #8ac926; font-size: 12.500px; letter-spacing: -1px; }
.r1 span { display: flex; align-items: center; gap: 5px; margin-right: 1px; }
.view { float: right; width: 38px; height: 24px; margin-top: 10px; border: 1px solid #aaa; border-radius: 7px; background: #fff; box-shadow: 0 0 4px rgba(0,0,0,.25); text-align: center; font-size: 9.500px; line-height: 19px; letter-spacing: -.35px; }
.card small { font-size: 10px; line-height: 20px; letter-spacing: -.1px; display: block; }
.last { padding: 6px 8px; }
.load { height: 40px; border: 1px solid #aaa; border-radius: 7px; background: #fff; box-shadow: 0 0 4px rgba(0,0,0,.3); text-align: center; line-height: 25px; font-size: 12px; letter-spacing: -.3px; }
.rsb b { height: 693px; }

/* save dialog */
.dialog { position: absolute; left: 7px; top: 4px; width: 954px; height: 536px; border: 1px solid #5d6065; background: #fff; box-shadow: 0 5px 18px rgba(0,0,0,.5); font-size: 12px; letter-spacing: -.2px; color: #000; display: flex; flex-direction: column; white-space: nowrap; }
.dtitle { height: 26px; display: flex; align-items: center; gap: 5px; padding: 0 10px 2px 4px; flex: none; }
.dtitle .x { margin-left: auto; }
.daddr { height: 35px; display: flex; align-items: center; padding: 0 12px 1px 13px; flex: none; }
.a2 { margin-left: 18px; } .a3 { margin-left: 14px; } .a4 { margin-left: 11px; } .lite { color: #d0d0d0; }
.path { width: 600px; height: 22px; border: 1px solid #d9d9d9; margin-left: 7px; display: flex; align-items: center; padding: 0 5px 0 3px; flex: none; }
.path em { width: 5px; height: 5px; border: solid #777; border-width: 1.500px 1.500px 0 0; transform: rotate(45deg); }
.path svg + em { margin-left: 6px; } .path span { margin-left: 11px; padding-bottom: 1px; }
.c1 { width: 45px; } .c2 { width: 82px; }
.pc { margin-left: auto; }
.refresh { width: 21px; height: 22px; border: 1px solid #d9d9d9; border-left: 0; display: flex; align-items: center; justify-content: center; }
.search { width: 202px; height: 22px; border: 1px solid #d9d9d9; margin-left: auto; display: flex; align-items: center; justify-content: space-between; padding: 0 8px; color: #6d6d6d; }
.search span { padding-bottom: 1px; letter-spacing: -.25px; }
.dcmd { height: 31px; background: #f5f6f8; border-bottom: 1px solid #e6e7e9; display: flex; align-items: center; padding: 0 15px 1px 18px; color: #1e395b; flex: none; }
.org2 { width: 53px; } .nf { margin-left: 30px; }
.vw { margin-left: auto; margin-right: 9px; }
.hlp { width: 16px; height: 16px; border-radius: 50%; background: #0a6cce; border: 1px solid #0a4c9a; color: #fff; font: 700 12px/14px "Open Sans", sans-serif; text-align: center; margin-left: 30px; }
.dmain { height: 325px; display: flex; overflow: hidden; flex: none; }
.tree { width: 140px; overflow: hidden; flex: none; margin-top: -1px; }
.tree div { height: 24px; width: 139px; display: flex; align-items: center; gap: 5px; padding-left: 32px; overflow: hidden; }
.tree .top { padding-left: 24px; }
.tree .od { margin-top: 8px; } .tree .pc2 { margin-top: 8px; } .tree .net { margin-top: 8px; }
.tree .sel { background: #d9d9d9; }
.tsb { width: 16px; background: #f0f0f0; display: flex; flex-direction: column; padding: 6px 0; margin-right: 2px; flex: none; }
.tsb svg { margin-left: 3.500px; } .tsb b { width: 15px; height: 169px; background: #cdcdcd; margin-top: 114px; } .tsb .dn { margin-top: auto; }
.list { flex: 1; border-left: 1px solid #f3f3f3; position: relative; color: #6d6d6d; }
.row { display: flex; height: 21px; align-items: center; }
.row .n { width: 273px; padding-left: 19px; display: flex; align-items: center; gap: 4px; color: #000; letter-spacing: -.45px; }
.row .d { width: 144px; padding-left: 6px; letter-spacing: -.5px; } .row .t { width: 120px; padding-left: 6px; } .row .s { width: 80px; text-align: right; padding-right: 7px; letter-spacing: -.5px; }
.hd { height: 25px; margin-bottom: 6px; color: #4c607a; }
.row.hd span { height: 25px; line-height: 26px; border-right: 1px solid #e5e5e5; letter-spacing: -.2px; }
.hd .n { color: #4c607a; padding-left: 18px; }
.hd .s { text-align: left; padding-left: 6px; }
.sort { position: absolute; left: 138px; top: 0; }
.dfoot { flex: 1; background: #f0f0f0; padding-top: 11px; }
.f { display: flex; align-items: center; height: 23px; }
.f2 { margin-top: 2px; }
.f label { width: 120px; text-align: right; margin-right: 5px; }
.inp { width: 822px; height: 23px; border: 1px solid #7a7a7a; background: #fff; display: flex; align-items: center; justify-content: space-between; padding: 0 3px 1px 5px; color: #333; }
.inp mark { background: #0078d7; color: #fff; line-height: 15px; border-right: 1px solid #e08a3c; letter-spacing: -.44px; }
.inp.g { background: #e1e1e1; border-color: #a5a5a5; padding-left: 3px; color: #000; }
.acts { display: flex; align-items: center; margin-top: 21px; gap: 14px; padding-right: 18px; }
.hide { display: flex; align-items: center; gap: 8px; margin: 5px auto 0 13px; letter-spacing: -.27px; }
.btn { width: 86px; height: 24px; border: 1px solid #adadad; background: #e1e1e1; text-align: center; line-height: 22px; }
.save { border: 2px solid #0078d7; line-height: 20px; }

/* fading message box */
.msg { position: absolute; left: 878px; top: 481px; width: 173px; height: 127px; background: #fff; border: 1px solid #777; opacity: .79; box-shadow: 0 6px 14px rgba(0,0,0,.35); font-size: 12px; letter-spacing: -.6px; display: flex; flex-direction: column; white-space: nowrap; color: #111; font-weight: 500; }
.mt { height: 24px; display: flex; align-items: center; gap: 5px; padding-left: 3px; flex: none; letter-spacing: -.55px; }
.mb { flex: 1; padding: 22px 0 0 11px; }
.mf { height: 42px; background: #f0f0f0; padding: 8px 0 0 82px; }
.mf span { display: block; width: 75px; height: 24px; border: 1px solid #777; border-right-width: 2px; border-bottom-width: 2px; background: #f4f4f4; text-align: center; line-height: 22px; }

/* taskbar */
.taskbar { position: absolute; left: 0; top: 1040px; width: 1920px; height: 40px; background: linear-gradient(90deg, #1f1b1b, #2f231f 20%, #241d1b 50%, #2b2020 82%, #1d1c1d 88%); display: flex; align-items: center; color: #fff; }
.start { width: 48px; display: flex; padding-left: 16px; }
.tsearch { width: 288px; height: 40px; background: #f2f2f2; display: flex; align-items: center; padding: 0 4px 0 12px; color: #333; font-size: 15px; letter-spacing: -.52px; }
.tsearch span { margin-left: 11px; }
.pill { width: 71px; height: 32px; background: #e2e2e2; border-radius: 6px; display: flex; align-items: center; justify-content: center; margin-left: auto; }
.ic { width: 49px; height: 40px; display: flex; align-items: center; justify-content: center; }
.ic.run { background: linear-gradient(#76b9ed, #76b9ed) 50% 100% / 40px 2px no-repeat; }
.ic.cr { margin-left: 1px; }
.ic.act { width: 44px; height: 28px; background-color: #4f4b49; background-size: 44px 2px; align-self: flex-end; padding-bottom: 12px; margin-left: 3px; }
.tray { margin-left: auto; display: flex; align-items: center; padding-right: 25px; font-size: 12px; }
.y1 { margin-left: 9px; } .y2 { margin-left: 8px; }
.eng { margin-left: 10px; letter-spacing: -.6px; }
.clock { text-align: center; line-height: 18px; margin-left: 13px; letter-spacing: -.4px; }
.y3 { margin-left: 18px; }
```
